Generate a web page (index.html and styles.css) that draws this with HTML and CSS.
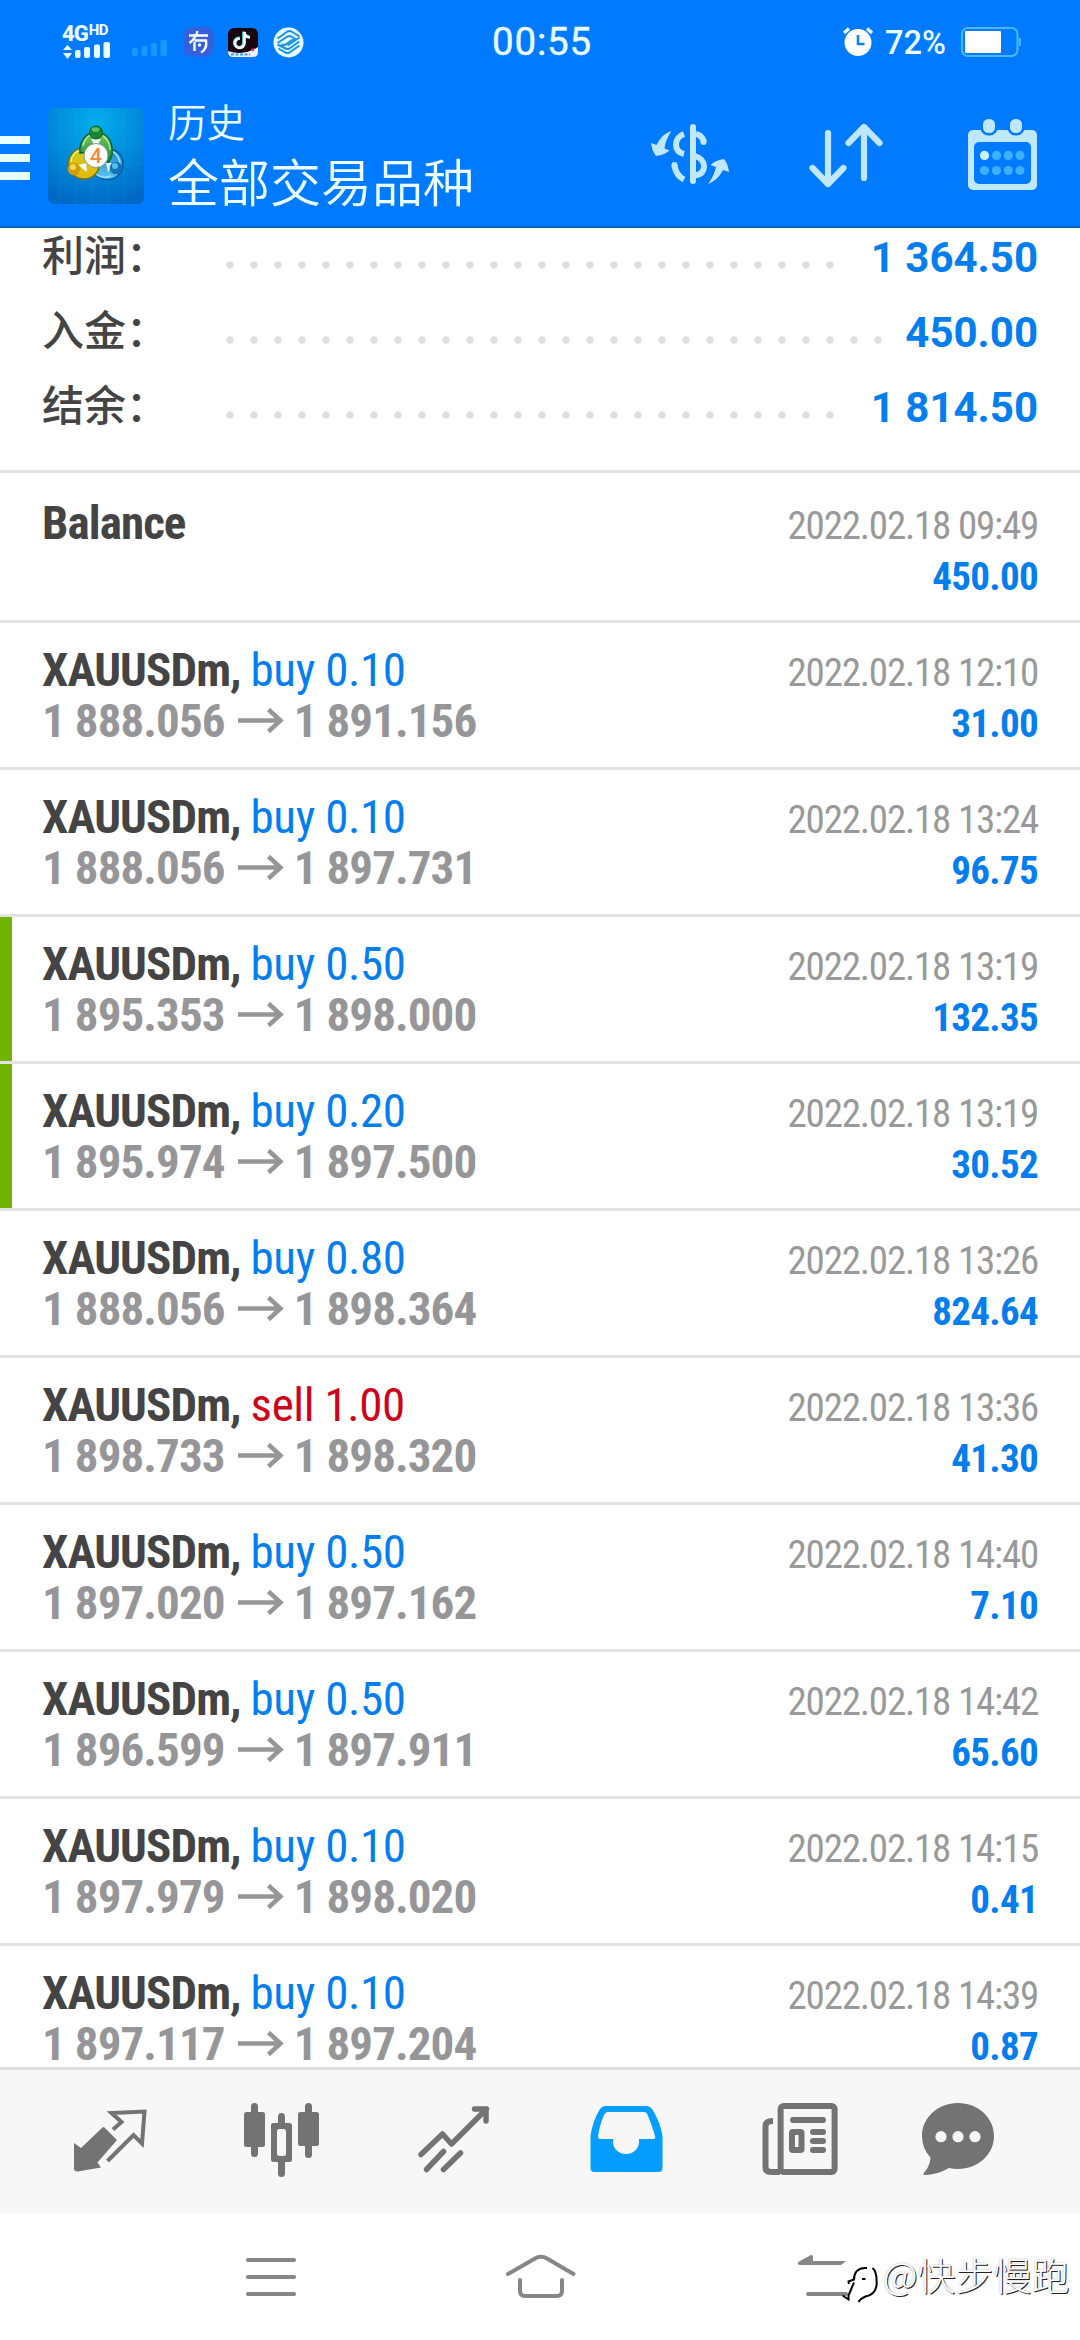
FILE: index.html
```html
<!DOCTYPE html>
<html lang="zh-CN">
<head>
<meta charset="utf-8">
<title>历史</title>
<link rel="stylesheet" href="styles.css">
</head>
<body>
<div class="screen">
  <header class="header">
    <div class="status">
      <div class="status-left">
        <div class="network">
          <div class="network-name">4G<sup>HD</sup></div>
          <svg class="bars" width="48" height="18" viewBox="62 40 48 18" fill="#eaffff"><path d="M63 48l4.500-5 4.500 5zM63 51l4.500 6 4.500-6z"/><rect x="75" y="48" width="5.500" height="8" rx="2"/><rect x="84" y="45" width="6" height="11" rx="2"/><rect x="94" y="42.500" width="6" height="13.500" rx="2"/><rect x="103.500" y="40" width="6.500" height="16" rx="2"/></svg>
        </div>
        <svg class="sim2" width="36" height="18" viewBox="131 40 36 18" fill="#1698ff"><rect x="132" y="48" width="6" height="8" rx="2"/><rect x="141.500" y="46" width="6" height="10" rx="2"/><rect x="151" y="43" width="6" height="13" rx="2"/><rect x="160.500" y="40" width="6.500" height="16" rx="2"/></svg>
        <svg class="app-you" width="30" height="30" viewBox="184 27 30 30"><rect x="184" y="27" width="29" height="29.500" rx="7" fill="#3560dc"/><path d="M189 35.500h19M197.500 31c-1 5-4 9-8 12M194.500 42v9M194.500 40.500h11.500c1 6-1 10-5 12" fill="none" stroke="#fff" stroke-width="2.400"/><circle cx="199.500" cy="45" r="1.700" fill="#fff"/></svg>
        <svg class="app-tiktok" width="31" height="31" viewBox="227 26 31 31"><rect x="228" y="27" width="30" height="29" rx="6" fill="#190510"/><path d="M228 50c9 3 20 3 30-4v5q0 5-5 5h-20q-5 0-5-6z" fill="#e9f4ff"/><path d="M231 53.500h19" stroke="#3b9eef" stroke-width="2" stroke-dasharray="3 1.500"/><path d="M251 48l4-1-2 4z" fill="#ee3543"/><path d="M244.500 31v11a4.700 4.700 0 1 1-4.500-4.500M244.500 31c0 3 2 5 5.500 5.500" fill="none" stroke="#46e8e8" stroke-width="3" transform="translate(-.8 -.5)"/><path d="M244.500 31v11a4.700 4.700 0 1 1-4.500-4.500M244.500 31c0 3 2 5 5.500 5.500" fill="none" stroke="#fff" stroke-width="2.600"/></svg>
        <svg class="app-mobile" width="31" height="31" viewBox="272.500 26.500 31 31"><circle cx="288" cy="42" r="15" fill="#e8fcff"/><path d="M277 38l10-7q2-1 4 0l8 5M277 42.500l10-6.500q2-1 4 0l3 2-9 6q-2 1-4 0M299 41l-10 7q-2 1-4 0l-8-4M299 45l-10 7q-2 1-4 0l-7-4M299 37l-12 8" fill="none" stroke="#1593e2" stroke-width="2"/></svg>
      </div>
      <div class="clock">00:55</div>
      <div class="status-right">
        <svg width="32" height="32" viewBox="841 27 32 32"><circle cx="857" cy="43.500" r="13.500" fill="#fff"/><path d="M843 34l5-4.500M871 34l-5-4.500" stroke="#e0faff" stroke-width="3.500"/><path d="M857 36v9h6.500" fill="none" stroke="#1480f0" stroke-width="2.600"/></svg>
        <span class="percent">72%</span>
        <svg width="62" height="32" viewBox="959 26 62 32"><rect x="961" y="28" width="55.500" height="28" rx="6" fill="none" stroke="#48b7ff" stroke-width="2.200"/><rect x="964" y="31" width="36" height="22" rx="1" fill="#fff"/><path d="M1019 38v8" stroke="#48b7ff" stroke-width="2"/></svg>
      </div>
    </div>
    <div class="toolbar">
      <svg class="drawer" width="30" height="46" viewBox="0 135 30 46" fill="#e8ffff"><path d="M0 136h30v8H0zM0 154h30v8H0zM0 172h30v8H0z"/></svg>
      <svg class="logo" width="96" height="96" viewBox="0 0 96 96">
        <defs>
          <radialGradient id="tile" cx=".5" cy=".15" r=".9"><stop offset="0" stop-color="#04aeee"/><stop offset=".5" stop-color="#028bdb"/><stop offset="1" stop-color="#0067c4"/></radialGradient>
          <linearGradient id="green" x2="0" y2="1"><stop offset="0" stop-color="#7cc95c"/><stop offset="1" stop-color="#14813a"/></linearGradient>
          <linearGradient id="gold" x2="0" y2="1"><stop offset="0" stop-color="#c9cc1c"/><stop offset="1" stop-color="#e8b80c"/></linearGradient>
          <linearGradient id="sky" x2="0" y2="1"><stop offset="0" stop-color="#1686cf"/><stop offset="1" stop-color="#5fc6f2"/></linearGradient>
        </defs>
        <rect width="96" height="96" rx="7" fill="url(#tile)"/>
        <path d="M12 0v96M28 0v96M44 0v96M60 0v96M76 0v96M0 16h96M0 36h96M0 56h96M0 76h96" stroke="#36b7ef" stroke-opacity=".13"/>
        <circle cx="59.500" cy="56" r="15.500" fill="url(#sky)" stroke="#07599e" stroke-width="1.600"/>
        <path d="M64 43q8 5 8 13M46 64q7 8 17 4" fill="none" stroke="#9be2ff" stroke-width="1.500"/>
        <circle cx="36" cy="55.500" r="15.500" fill="url(#gold)" stroke="#747414" stroke-width="1.600"/>
        <path d="M23 54q1-10 10-12" fill="none" stroke="#f5f18b" stroke-width="1.500"/>
        <path d="M32 45a16.200 18.500 0 1 1 28 10l-10-12z" fill="url(#green)" stroke="#086a35" stroke-width="1.600"/>
        <path d="M35 38q2-9 8-11M55 28q7 4 7 14" fill="none" stroke="#b5e98e" stroke-width="1.500"/>
        <path d="M43 31h10l-3 6h-4zM30 57l8-2 1 9zM66 55l-8 0 2 9z" fill="#effbff"/>
        <circle cx="48" cy="24.500" r="6.500" fill="#178736" stroke="#096028"/><ellipse cx="47.500" cy="21.500" rx="3.800" ry="2.300" fill="#69bd65"/>
        <circle cx="26" cy="61" r="6.300" fill="#d39a0b"/><circle cx="25" cy="59" r="3" fill="#eddb4f"/>
        <circle cx="68" cy="60" r="6.300" fill="#1173b9"/><circle cx="67" cy="58" r="3" fill="#5bbdf0"/>
        <circle cx="48" cy="47.500" r="12" fill="#fff" stroke="#8b9a86" stroke-width="1"/>
        <text x="48" y="55" text-anchor="middle" class="logo-number">4</text>
      </svg>
      <div class="titles"><div class="title">历史</div><div class="subtitle">全部交易品种</div></div>
      <div class="actions">
        <svg width="80" height="64" viewBox="650 123 80 64" fill="none" stroke="#bfe8ff" stroke-width="6"><path d="M693 127v54" stroke-linecap="round"/><path d="M684 134q-8 3-8 10.500t8 9.500M684 179.500q-8-4-9.500-14" stroke-width="6"/><path d="M674.500 165v1" stroke-linecap="round"/><path d="M696 134q6 1 8 8" /><path d="M703.500 141v1" stroke-linecap="round"/><path d="M695 156q9 3 9 10.500t-9 9"/><path d="M671.500 131q-10 3-15 14l-5.500-2q1 8 5 13 8-1 13.500-5.500l-5-2q1-9 7-17.500zM708 184q10-4 15-14l6 2q-1-8-5-13-8 1-13.500 6l5.500 2q-2 9-8 17z" fill="#bfe8ff" stroke="none"/></svg>
        <svg width="76" height="70" viewBox="808 121 76 70" fill="none" stroke="#bfe8ff" stroke-width="6.200" stroke-linecap="round" stroke-linejoin="round"><path d="M828 133v51M812.500 168l15.500 16 15.500-16M864 178v-51M848.500 143l15.500-16 15.500 16"/></svg>
        <svg width="72" height="74" viewBox="967 118 72 74"><rect x="968" y="130" width="69" height="60" rx="5" fill="#bfe8ff"/><rect x="974" y="142" width="57" height="42" rx="5" fill="#007bff"/><g fill="#bfe8ff" stroke="#007bff" stroke-width="5" paint-order="stroke"><rect x="983" y="119" width="12" height="14" rx="5.500"/><rect x="1010" y="119" width="12" height="14" rx="5.500"/></g><g fill="#3db1ff"><circle cx="984.500" cy="155.400" r="4.600" fill="#c8f2ff"/><circle cx="996.500" cy="155.400" r="4.600"/><circle cx="1008.300" cy="155.400" r="4.600"/><circle cx="1020" cy="155.400" r="4.600"/><circle cx="984.500" cy="170.500" r="4.600"/><circle cx="996.500" cy="170.500" r="4.600"/><circle cx="1008.300" cy="170.500" r="4.600"/><circle cx="1020" cy="170.500" r="4.600"/></g></svg>
      </div>
    </div>
  </header>
  <main class="content">
    <section class="summary">
      <div class="sum-row"><span class="label">利润：</span><i class="dots long"></i><b>1 364.50</b></div>
      <div class="sum-row"><span class="label">入金：</span><i class="dots longer"></i><b>450.00</b></div>
      <div class="sum-row"><span class="label">结余：</span><i class="dots long"></i><b>1 814.50</b></div>
    </section>
    <section class="deals">
      <article class="deal balance"><div class="info"><div class="line"><b>Balance</b></div></div><div class="result"><div class="date">2022.02.18 09:49</div><div class="amount">450.00</div></div></article>
      <article class="deal"><div class="info"><div class="line"><b>XAUUSDm,</b> <span class="buy">buy 0.10</span></div><div class="price"><span>1 888.056</span><svg class="arrow" viewBox="0 0 46 25"><path d="M0 12.500h42M30.500 1.500l12 11-12 11"/></svg><span>1 891.156</span></div></div><div class="result"><div class="date">2022.02.18 12:10</div><div class="amount">31.00</div></div></article>
      <article class="deal"><div class="info"><div class="line"><b>XAUUSDm,</b> <span class="buy">buy 0.10</span></div><div class="price"><span>1 888.056</span><svg class="arrow" viewBox="0 0 46 25"><path d="M0 12.500h42M30.500 1.500l12 11-12 11"/></svg><span>1 897.731</span></div></div><div class="result"><div class="date">2022.02.18 13:24</div><div class="amount">96.75</div></div></article>
      <article class="deal marked"><div class="info"><div class="line"><b>XAUUSDm,</b> <span class="buy">buy 0.50</span></div><div class="price"><span>1 895.353</span><svg class="arrow" viewBox="0 0 46 25"><path d="M0 12.500h42M30.500 1.500l12 11-12 11"/></svg><span>1 898.000</span></div></div><div class="result"><div class="date">2022.02.18 13:19</div><div class="amount">132.35</div></div></article>
      <article class="deal marked"><div class="info"><div class="line"><b>XAUUSDm,</b> <span class="buy">buy 0.20</span></div><div class="price"><span>1 895.974</span><svg class="arrow" viewBox="0 0 46 25"><path d="M0 12.500h42M30.500 1.500l12 11-12 11"/></svg><span>1 897.500</span></div></div><div class="result"><div class="date">2022.02.18 13:19</div><div class="amount">30.52</div></div></article>
      <article class="deal"><div class="info"><div class="line"><b>XAUUSDm,</b> <span class="buy">buy 0.80</span></div><div class="price"><span>1 888.056</span><svg class="arrow" viewBox="0 0 46 25"><path d="M0 12.500h42M30.500 1.500l12 11-12 11"/></svg><span>1 898.364</span></div></div><div class="result"><div class="date">2022.02.18 13:26</div><div class="amount">824.64</div></div></article>
      <article class="deal"><div class="info"><div class="line"><b>XAUUSDm,</b> <span class="sell">sell 1.00</span></div><div class="price"><span>1 898.733</span><svg class="arrow" viewBox="0 0 46 25"><path d="M0 12.500h42M30.500 1.500l12 11-12 11"/></svg><span>1 898.320</span></div></div><div class="result"><div class="date">2022.02.18 13:36</div><div class="amount">41.30</div></div></article>
      <article class="deal"><div class="info"><div class="line"><b>XAUUSDm,</b> <span class="buy">buy 0.50</span></div><div class="price"><span>1 897.020</span><svg class="arrow" viewBox="0 0 46 25"><path d="M0 12.500h42M30.500 1.500l12 11-12 11"/></svg><span>1 897.162</span></div></div><div class="result"><div class="date">2022.02.18 14:40</div><div class="amount">7.10</div></div></article>
      <article class="deal"><div class="info"><div class="line"><b>XAUUSDm,</b> <span class="buy">buy 0.50</span></div><div class="price"><span>1 896.599</span><svg class="arrow" viewBox="0 0 46 25"><path d="M0 12.500h42M30.500 1.500l12 11-12 11"/></svg><span>1 897.911</span></div></div><div class="result"><div class="date">2022.02.18 14:42</div><div class="amount">65.60</div></div></article>
      <article class="deal"><div class="info"><div class="line"><b>XAUUSDm,</b> <span class="buy">buy 0.10</span></div><div class="price"><span>1 897.979</span><svg class="arrow" viewBox="0 0 46 25"><path d="M0 12.500h42M30.500 1.500l12 11-12 11"/></svg><span>1 898.020</span></div></div><div class="result"><div class="date">2022.02.18 14:15</div><div class="amount">0.41</div></div></article>
      <article class="deal"><div class="info"><div class="line"><b>XAUUSDm,</b> <span class="buy">buy 0.10</span></div><div class="price"><span>1 897.117</span><svg class="arrow" viewBox="0 0 46 25"><path d="M0 12.500h42M30.500 1.500l12 11-12 11"/></svg><span>1 897.204</span></div></div><div class="result"><div class="date">2022.02.18 14:39</div><div class="amount">0.87</div></div></article>
    </section>
  </main>
  <nav class="tabs">
    <a class="tab"><svg viewBox="68 2100 81 81"><path d="M74 2143l7 5 21.500-20.500q1-1 2 0L117 2140l-19.500 22.500 3.500 5-23.500 4q-3.500 0-3.500-3z" fill="#737373"/><path d="M113 2129.500l8.500-7.500-10-9 33-1.500-2.500 32-8.500-8.500-26 26" fill="none" stroke="#737373" stroke-width="4"/></svg></a>
    <a class="tab"><svg viewBox="241 2100 81 81"><g stroke="#737373" stroke-width="7" stroke-linecap="round"><path d="M254.500 2106.500v47M281.500 2116.500v57M308.500 2106.500v48"/></g><rect x="244" y="2112" width="21" height="35" rx="2.500" fill="#737373"/><rect x="298" y="2112" width="21" height="34" rx="2.500" fill="#737373"/><rect x="271" y="2123" width="21" height="39" rx="2.500" fill="#737373"/><rect x="277" y="2129" width="9" height="27" rx="2.500" fill="#f7f7f7"/></svg></a>
    <a class="tab"><svg viewBox="414 2100 81 81" fill="none" stroke="#737373" stroke-width="5.500" stroke-linecap="round" stroke-linejoin="round"><path d="M421 2154.500l21.500-20.500 9 10 35-35M474.500 2109h11.500v12M426.500 2169.500l17-18M443.500 2169.500l17-16.500"/></svg></a>
    <a class="tab"><svg viewBox="587 2100 81 81"><path fill="#059dff" fill-rule="evenodd" d="M605 2106h41q4 0 6 3 8 12 10.500 27v32q0 4-4 4h-64q-4 0-4-4v-32q2-15 9.500-27 2-3 5-3zM607 2112q-2 1-3 3-4 9-6 21 0 3 2 3h13v3a13 12 0 0 0 26 0v-3h14q3 0 2-3-3-11-7-20-1-4-4-4z"/></svg></a>
    <a class="tab"><svg viewBox="760 2100 81 81" fill="none" stroke="#737373" stroke-width="6"><rect x="780.600" y="2106" width="54" height="66" rx="3"/><path d="M780 2172h-9q-5.500 0-5.500-5v-41q0-5 7.500-5"/><path d="M793 2120h30M813 2132h10M813 2141h10M813 2150h10" stroke-linecap="round"/><rect x="792" y="2132" width="9.500" height="18" rx="1"/></svg></a>
    <a class="tab last"><svg viewBox="918 2100 81 81"><path d="M958 2103c20 0 36 14.500 36 33s-16 33-36 33q-5 0-9-1-12 7-24 7-3 0-1-2 6-7 6.500-15.500-8.500-9-8.500-21.500c0-18.500 16-33 36-33z" fill="#737373"/><g fill="#f7f7f7"><circle cx="941" cy="2136.700" r="5.600"/><circle cx="958" cy="2136.700" r="5.600"/><circle cx="975" cy="2136.700" r="5.600"/></g></svg></a>
  </nav>
  <footer class="system">
    <svg width="52" height="44" viewBox="245 2255 52 44" fill="none" stroke="#868686" stroke-width="4.200" stroke-linecap="round"><path d="M248 2260h46M248 2277h46M248 2294h46"/></svg>
    <svg width="72" height="46" viewBox="505 2253 72 46" fill="none" stroke="#868686" stroke-width="4" stroke-linecap="round"><path d="M508 2274l27-15.500q6-3.500 12 0L573.500 2274M520 2280v11q0 5 5 5h32q5 0 5-5v-11"/></svg>
    <svg class="back" width="52" height="46" viewBox="796 2253 52 46"><path d="M799 2261.500l12-6.500q2-.5 2 2v4h33l-5 4h-41q-4-1-1-3.500z" fill="#868686"/><path d="M808 2294h38" stroke="#868686" stroke-width="4" stroke-linecap="round"/></svg>
    <div class="watermark">
      <svg width="36" height="46" viewBox="842 2262 36 46" fill="none"><path d="M851 2284h6q1-13 12-12M858 2282l-8 19M873 2270q9 10 0 22-5 7-12 9" stroke="#fff" stroke-width="5"/><path d="M849 2284l-.5-2.500 5.500-2q0-11 11-11.500h2M854 2282.500l-5.500 13 0 4-6-4M872.500 2268q5 4 4 18-2 9-11 10.500-5 2-7 5.500M862 2279h3.500" stroke="#050505" stroke-width="2"/></svg><span>@快步慢跑</span>
    </div>
  </footer>
</div>
</body>
</html>
```
FILE: styles.css
```css
* { box-sizing: border-box; }
body { margin: 0; background: #fff; font-family: Roboto, "Noto Sans CJK SC", sans-serif; }
svg { display: block; flex: none; }
.screen { width: 1080px; height: 2340px; display: flex; flex-direction: column; overflow: hidden; }

.header { height: 228px; flex: none; background: #007bff; border-bottom: 2px solid #0868c8; color: #ecffff; }
.status { height: 84px; display: grid; grid-template-columns: 1fr auto 1fr; align-items: center; padding: 0 58px 0 62px; }
.status-left { display: flex; align-items: center; }
.network { width: 48px; margin-right: 21px; padding-top: 2px; }
.network-name { display: flex; height: 16px; font-size: 22px; line-height: 16px; font-weight: 800; letter-spacing: -1px; white-space: nowrap; }
.network-name sup { font-size: 15px; line-height: 9px; letter-spacing: -.5px; margin-left: 1px; }
.sim2 { margin: 14px 17px 0 0; }
.app-you { margin-right: 13px; }
.app-tiktok { margin-right: 14.500px; }
.clock { font-size: 38.500px; line-height: 84px; font-weight: 400; letter-spacing: .8px; -webkit-text-stroke: .4px #ecffff; }
.status-right { display: flex; justify-content: flex-end; align-items: center; }
.percent { font-size: 32.500px; line-height: 36px; padding-top: 2px; font-weight: 500; width: 63px; margin: 0 12px 0 11px; letter-spacing: 0; }

.toolbar { height: 142px; display: flex; align-items: flex-start; }
.drawer { margin: 51px 18px 0 0; }
.logo { margin: 24px 24px 0 0; }
.logo-number { font: 500 21px Roboto, sans-serif; fill: #f1883c; }
.titles { padding-top: 8px; flex: 1; font-family: "Noto Sans CJK SC", sans-serif; font-weight: 350; white-space: nowrap; }
.title { font-size: 38.500px; line-height: 56px; }
.subtitle { font-size: 51px; line-height: 64px; }
.actions { display: flex; align-items: flex-start; padding: 34px 41px 0 0; }
.actions svg:nth-child(1) { margin: 5px 78px 0 0; }
.actions svg:nth-child(2) { margin: 3px 83px 0 0; }

.content { height: 1839px; flex: none; overflow: hidden; }
.summary { height: 242px; padding: 0 42px; }
.sum-row { height: 75px; display: flex; align-items: flex-start; }
.label { width: 184px; font: 500 42px/50px "Noto Sans CJK SC", sans-serif; color: #444; white-space: nowrap; }
.dots { height: 8px; margin: 33px 0 0 -8px; background: radial-gradient(circle, #dfdfdf 3.400px, transparent 4px) 0 0 / 24px 8px repeat-x; }
.long { width: 624px; }
.longer { width: 672px; }
.sum-row b { margin-left: auto; font-size: 42px; line-height: 60px; font-weight: 700; color: #047eee; white-space: nowrap; }

.deal { height: 147px; border-top: 3px solid #e3e3e3; padding: 21px 42px 0; display: flex; justify-content: space-between; font-family: "Roboto Condensed", Roboto, sans-serif; white-space: nowrap; }
.deal.balance { height: 150px; padding-top: 24px; }
.marked { background: linear-gradient(#71b300, #71b300) 0 0 / 12px 100% no-repeat; }
.line, .price { height: 51px; line-height: 51px; font-size: 47px; color: #444; letter-spacing: -.9px; }
.price { display: flex; align-items: center; font-weight: 700; color: #969698; }
.arrow { width: 46px; height: 25px; margin: 0 10px 0 13px; fill: none; stroke: #969698; stroke-width: 4.500; }
.buy, .sell { letter-spacing: -.4px; }
.buy { color: #047eee; }
.sell { color: #d0021b; }
.result { text-align: right; font-size: 39px; line-height: 51px; padding-top: 4px; }
.date { color: #999; letter-spacing: -1.200px; }
.amount { color: #047eee; font-weight: 700; letter-spacing: -.7px; }

.tabs { height: 147px; flex: none; display: flex; align-items: flex-start; padding: 30px 0 0 22px; background: #f7f7f7; border-top: 3px solid #e0e0e0; }
.tab { width: 173px; display: flex; justify-content: center; }
.tab.last { width: 143px; }
.tab svg { width: 81px; height: 81px; }

.system { height: 126px; flex: none; display: flex; align-items: flex-start; padding: 39px 0 0 245px; background: #fff; }
.system > svg:nth-child(1) { margin: 2px 208px 0 0; }
.system > svg:nth-child(2) { margin-right: 219px; }
.watermark { display: flex; margin: 9px 0 0 -6px; }
.watermark span { font: 300 38px/46px "Noto Sans CJK SC", sans-serif; color: #fff; text-shadow: 1px 1px 0 #222, 0 0 2px #aaa; margin: -11px 0 0 5px; white-space: nowrap; }
```
